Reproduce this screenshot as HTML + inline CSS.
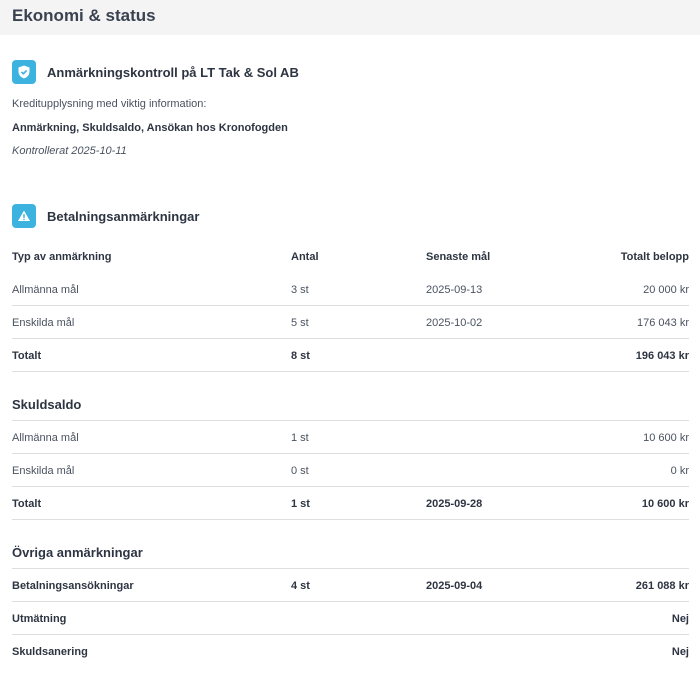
<!DOCTYPE html>
<html><head><meta charset="utf-8"><style>
*{margin:0;padding:0;box-sizing:border-box}
body{width:700px;height:678px;background:#fff;font-family:"Liberation Sans",sans-serif;color:#2d3542;position:relative;overflow:hidden}
.hdr{position:absolute;left:0;top:0;width:700px;height:35px;background:#f4f4f5}
.t{position:absolute;white-space:nowrap;font-size:11px;line-height:14px;margin-top:1px}
.b{font-weight:bold}
.r{text-align:right}
.ln{position:absolute;left:12px;width:677px;height:1px;background:#dcdee2}
.ic{position:absolute;left:12px;width:24px;height:24px;border-radius:4px;background:#3cb3df}
.g{color:#4a5260}
</style></head><body>
<div class="hdr"></div>
<div class="t b" style="left:12px;top:4px;font-size:17px;line-height:22px;color:#3a4250">Ekonomi &amp; status</div>

<div class="ic" style="top:60px"><svg width="24" height="24" viewBox="0 0 24 24"><path d="M12 5.5l5.5 2v4c0 3.5-2.5 6-5.5 7-3-1-5.5-3.5-5.5-7v-4z" fill="#fff"/><path d="M9.5 12l1.8 1.8 3.3-3.3" stroke="#3cb3df" stroke-width="1.6" fill="none"/></svg></div>
<div class="t b" style="left:47px;top:64px;font-size:13px;line-height:16px">Anmärkningskontroll på LT Tak &amp; Sol AB</div>
<div class="t g" style="left:12px;top:96px">Kreditupplysning med viktig information:</div>
<div class="t b" style="left:12px;top:120px">Anmärkning, Skuldsaldo, Ansökan hos Kronofogden</div>
<div class="t g" style="left:12px;top:143px;font-style:italic">Kontrollerat 2025-10-11</div>

<div class="ic" style="top:204px"><svg width="24" height="24" viewBox="0 0 24 24"><path d="M12 6.5l6 10.5H6z" fill="#fff"/><rect x="11.3" y="10" width="1.4" height="4" fill="#3cb3df"/><rect x="11.3" y="14.8" width="1.4" height="1.3" fill="#3cb3df"/></svg></div>
<div class="t b" style="left:47px;top:208px;font-size:13px;line-height:16px">Betalningsanmärkningar</div>

<div class="t b" style="left:12px;top:249px">Typ av anmärkning</div>
<div class="t b" style="left:291px;top:249px">Antal</div>
<div class="t b" style="left:426px;top:249px">Senaste mål</div>
<div class="t b r" style="right:11px;top:249px">Totalt belopp</div>

<div class="t g" style="left:12px;top:282px">Allmänna mål</div><div class="t g" style="left:291px;top:282px">3 st</div><div class="t g" style="left:426px;top:282px">2025-09-13</div><div class="t g" style="right:11px;top:282px">20 000 kr</div>
<div class="ln" style="top:305px"></div>
<div class="t g" style="left:12px;top:315px">Enskilda mål</div><div class="t g" style="left:291px;top:315px">5 st</div><div class="t g" style="left:426px;top:315px">2025-10-02</div><div class="t g" style="right:11px;top:315px">176 043 kr</div>
<div class="ln" style="top:338px"></div>
<div class="t b" style="left:12px;top:348px">Totalt</div><div class="t b" style="left:291px;top:348px">8 st</div><div class="t b" style="right:11px;top:348px">196 043 kr</div>
<div class="ln" style="top:371px"></div>

<div class="t b" style="left:12px;top:396px;font-size:13px;line-height:16px">Skuldsaldo</div>
<div class="ln" style="top:420px"></div>
<div class="t g" style="left:12px;top:430px">Allmänna mål</div><div class="t g" style="left:291px;top:430px">1 st</div><div class="t g" style="right:11px;top:430px">10 600 kr</div>
<div class="ln" style="top:453px"></div>
<div class="t g" style="left:12px;top:463px">Enskilda mål</div><div class="t g" style="left:291px;top:463px">0 st</div><div class="t g" style="right:11px;top:463px">0 kr</div>
<div class="ln" style="top:486px"></div>
<div class="t b" style="left:12px;top:496px">Totalt</div><div class="t b" style="left:291px;top:496px">1 st</div><div class="t b" style="left:426px;top:496px">2025-09-28</div><div class="t b" style="right:11px;top:496px">10 600 kr</div>
<div class="ln" style="top:519px"></div>

<div class="t b" style="left:12px;top:544px;font-size:13px;line-height:16px">Övriga anmärkningar</div>
<div class="ln" style="top:568px"></div>
<div class="t b" style="left:12px;top:578px">Betalningsansökningar</div><div class="t b" style="left:291px;top:578px">4 st</div><div class="t b" style="left:426px;top:578px">2025-09-04</div><div class="t b" style="right:11px;top:578px">261 088 kr</div>
<div class="ln" style="top:601px"></div>
<div class="t b" style="left:12px;top:611px">Utmätning</div><div class="t b" style="right:11px;top:611px">Nej</div>
<div class="ln" style="top:634px"></div>
<div class="t b" style="left:12px;top:644px">Skuldsanering</div><div class="t b" style="right:11px;top:644px">Nej</div>
</body></html>
